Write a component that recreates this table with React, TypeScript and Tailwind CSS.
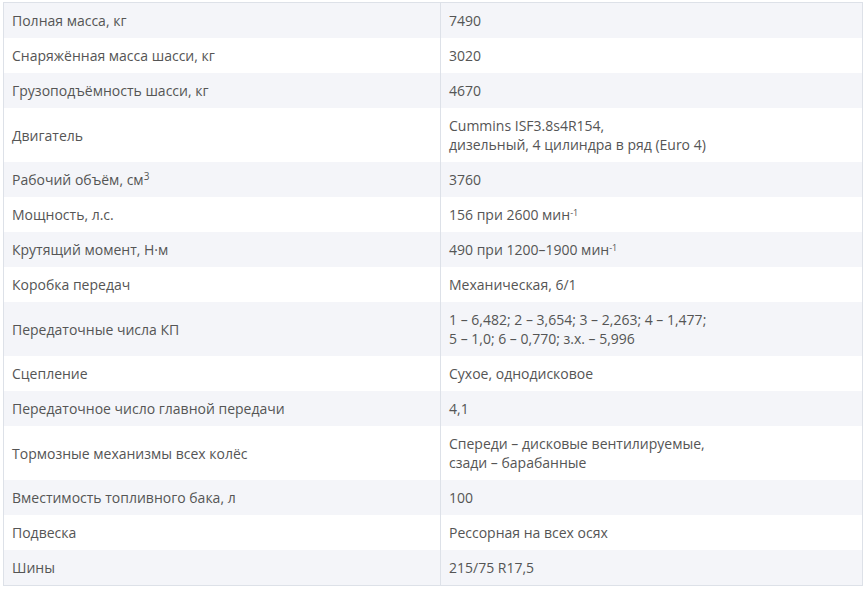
const SPECS: { label: React.ReactNode; value: React.ReactNode }[] = [
  { label: "Полная масса, кг", value: "7490" },
  { label: "Снаряжённая масса шасси, кг", value: "3020" },
  { label: "Грузоподъёмность шасси, кг", value: "4670" },
  {
    label: "Двигатель",
    value: (
      <>
        Cummins ISF3.8s4R154,
        <br />
        дизельный, 4 цилиндра в ряд (Euro 4)
      </>
    ),
  },
  {
    label: (
      <>
        Рабочий объём, см<sup className="text-[10px]">3</sup>
      </>
    ),
    value: "3760",
  },
  {
    label: "Мощность, л.с.",
    value: (
      <>
        156 при 2600 мин<sup className="text-[9px]">-1</sup>
      </>
    ),
  },
  {
    label: "Крутящий момент, Н·м",
    value: (
      <>
        490 при 1200–1900 мин<sup className="text-[9px]">-1</sup>
      </>
    ),
  },
  { label: "Коробка передач", value: "Механическая, 6/1" },
  {
    label: "Передаточные числа КП",
    value: (
      <>
        1 – 6,482; 2 – 3,654; 3 – 2,263; 4 – 1,477;
        <br />5 – 1,0; 6 – 0,770; з.х. – 5,996
      </>
    ),
  },
  { label: "Сцепление", value: "Сухое, однодисковое" },
  { label: "Передаточное число главной передачи", value: "4,1" },
  {
    label: "Тормозные механизмы всех колёс",
    value: (
      <>
        Спереди – дисковые вентилируемые,
        <br />
        сзади – барабанные
      </>
    ),
  },
  { label: "Вместимость топливного бака, л", value: "100" },
  { label: "Подвеска", value: "Рессорная на всех осях" },
  { label: "Шины", value: "215/75 R17,5" },
];

export default function App() {
  return (
    <div className="w-[867px] h-[592px] bg-white pl-[3px] pt-[2px] font-['Open_Sans',sans-serif] text-[14px] leading-[19px] text-[#555]">
      <table className="w-[860px] border border-[#dde1e8] border-collapse">
        <tbody>
          {SPECS.map((row, i) => (
            <tr key={i} className={i % 2 === 0 ? "bg-[#f4f5f9]" : "bg-white"}>
              <td className="w-[437px] px-2 py-2 align-middle border-r border-[#dde1e8]">
                {row.label}
              </td>
              <td className="px-2 py-2 align-middle">{row.value}</td>
            </tr>
          ))}
        </tbody>
      </table>
    </div>
  );
}
